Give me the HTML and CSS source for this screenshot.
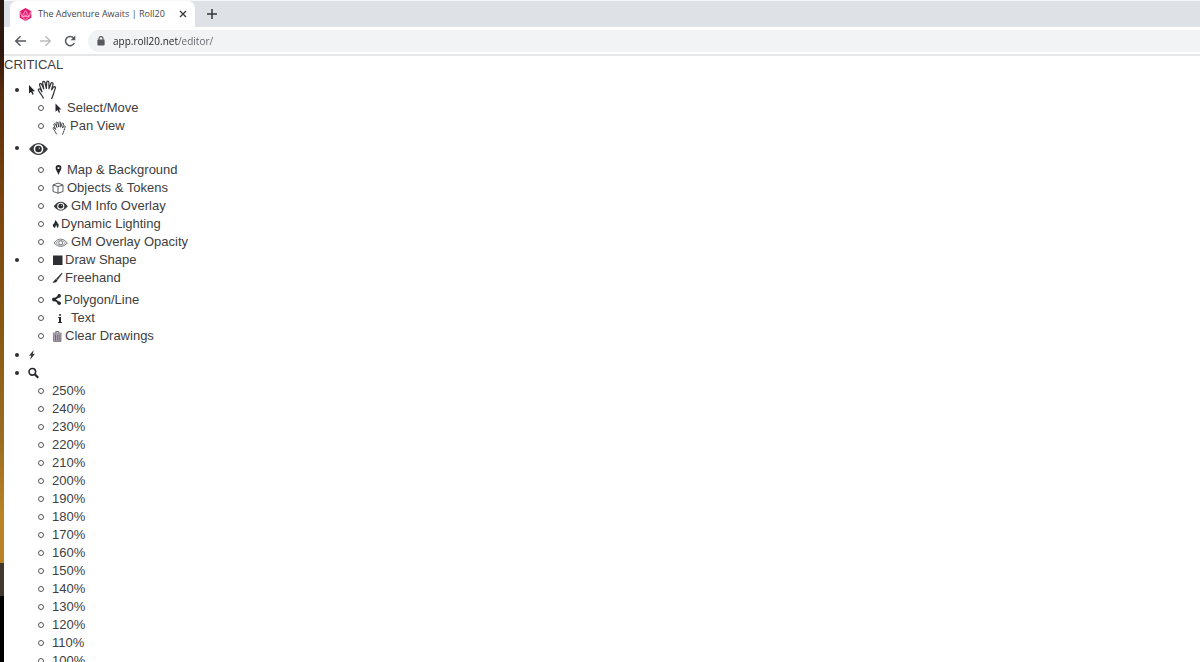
FILE: index.html
```html
<!DOCTYPE html>
<html lang="en">
<head>
<meta charset="utf-8">
<title>The Adventure Awaits | Roll20</title>
<link rel="stylesheet" href="styles.css">
</head>
<body>
<div class="desktop"></div>
<div class="window">
  <header class="browser">
    <div class="tabs">
      <div class="tab">
        <svg class="favicon" width="13" height="13" viewBox="0 0 13 13"><path d="M6.500 0 12.300 3.200V9.800L6.500 13 .7 9.800V3.200Z" fill="#e9186f"/><path d="M6.500 2.500 10 8.600H3ZM1 3.500l2 5 3.500 3.500L10 8.600l2-5M4.800 7.200h3.400" fill="none" stroke="#ffc3da" stroke-width=".8"/></svg>
        <span class="title">The Adventure Awaits | Roll20</span>
        <button class="plain" aria-label="Close tab"><svg width="8" height="8" viewBox="0 0 8 8"><path d="M1 1 7 7M7 1 1 7" stroke="#333538" stroke-width="1.300"/></svg></button>
      </div>
      <button class="plain" aria-label="New tab"><svg width="12" height="12" viewBox="0 0 12 12"><path d="M6 1V11M1 6H11" stroke="#35373a" stroke-width="1.500"/></svg></button>
    </div>
    <div class="toolbar">
      <button class="plain" aria-label="Back"><svg width="13" height="12" viewBox="0 0 13 12"><path d="M12 6H2M6.500 1.200 1.700 6l4.800 4.800" fill="none" stroke="#55585c" stroke-width="1.400"/></svg></button>
      <button class="plain" aria-label="Forward"><svg width="13" height="12" viewBox="0 0 13 12"><path d="M1 6H11M6.500 1.200 11.300 6l-4.800 4.800" fill="none" stroke="#babcbe" stroke-width="1.400"/></svg></button>
      <button class="plain" aria-label="Reload"><svg width="12" height="12" viewBox="0 0 12 12"><path d="M10.300 8A4.600 4.600 0 1 1 9.600 3" fill="none" stroke="#55585c" stroke-width="1.500"/><path d="M11.300.6V5.300H6.600Z" fill="#55585c"/></svg></button>
      <div class="address">
        <svg width="8" height="10" viewBox="0 0 8 10"><path d="M2 4V2.600a2 2 0 0 1 4 0V4" fill="none" stroke="#55585c" stroke-width="1.100"/><rect x=".4" y="3.600" width="7.200" height="6" rx=".8" fill="#55585c"/></svg>
        <input class="url" type="text" aria-label="Address" value="app.roll20.net/editor/">
      </div>
    </div>
  </header>
  <main class="page">
    <p class="notice">CRITICAL</p>
    <ul class="menu">
      <li class="group">
        <div class="head first">
          <svg width="9" height="12" viewBox="0 0 9 12"><path d="M1 1v8.600L3 7.800l1.400 3 1.300-.6L4.400 7.300H7Z" fill="#222428"/></svg>
          <svg width="20" height="20" viewBox="0 0 20 20"><use href="#hand"/></svg>
        </div>
        <ul class="sub">
          <li><svg width="15" height="12" viewBox="0 0 15 12"><path d="M3.500 1.500v8.300L5.500 8l1.300 2.800 1.300-.6L6.900 7.400h2.500Z" fill="#2c2630"/></svg>Select/Move</li>
          <li><svg class="low" width="18" height="14" viewBox="0 0 18 14"><use href="#hand" transform="scale(.72)"/></svg>Pan View</li>
        </ul>
      </li>
      <li class="group">
        <div class="head tall">
          <svg width="21" height="14" viewBox="0 0 21 14"><use href="#eye"/></svg>
        </div>
        <ul class="sub">
          <li><svg width="15" height="12" viewBox="0 0 15 12"><path fill-rule="evenodd" d="M6.500 1a2.900 2.900 0 0 1 2.900 3C9.400 6 7.200 8 6.500 11 5.800 8 3.600 6 3.600 4a2.900 2.900 0 0 1 2.900-3Zm0 1.900a1.100 1.100 0 1 0 0 2.200 1.100 1.100 0 0 0 0-2.200Z" fill="#25272a"/></svg>Map &amp; Background</li>
          <li><svg width="15" height="12" viewBox="0 0 15 12"><path d="M1 3 6 1l5 2-5 1.500ZM1 3v6.500l5 1.700 5-1.700V3M6 4.500v6.700" fill="none" stroke="#4a4c50" stroke-width=".9" stroke-linejoin="round"/></svg>Objects &amp; Tokens</li>
          <li><svg width="19" height="12" viewBox="0 0 19 12"><use href="#eye" transform="translate(1 1) scale(.74)"/></svg>GM Info Overlay</li>
          <li><svg width="9" height="12" viewBox="0 0 9 12"><path d="M3.200 2C5.500 4 6 5.500 5.800 6.200l.5-.8C7 7 6.800 9 5 10 5.300 8.500 4.500 7.500 4 7c0 1.200-1 1.500-.8 3C.8 9.500.3 7 1.500 5.500l.5.900C2 4.500 3.300 4 3.200 2Z" fill="#28292c"/></svg>Dynamic Lighting</li>
          <li><svg width="19" height="12" viewBox="0 0 19 12"><g fill="none" stroke="#77797c"><path d="M2 7Q8.500-1 15.500 7 8.500 14 2 7Z"/><path d="M4 7Q8.500 2 13.500 7 8.500 11.500 4 7Z" stroke-width=".6"/><circle cx="8.700" cy="6.800" r="2"/></g></svg>GM Overlay Opacity</li>
        </ul>
      </li>
      <li class="group headless">
        <ul class="sub">
          <li><svg width="13" height="12" viewBox="0 0 13 12"><path d="M1 1.500h9.500v9.500H1Z" fill="#2d2f32"/></svg>Draw Shape</li>
          <li><svg width="13" height="12" viewBox="0 0 13 12"><path d="M10.300 1.500 5.500 7.800 4.300 6.900 9.300 1.500Q10 1 10.300 1.500ZM3.900 7.300l1.300 1C5 10 2.600 11 .8 10.200 2.800 9.700 2.200 7.700 3.900 7.300Z" fill="#25272a" stroke="#25272a" stroke-width=".4"/></svg>Freehand</li>
          <li class="spaced"><svg width="12" height="12" viewBox="0 0 12 12"><path d="M7.200 2 2.300 5.500 7.200 9" fill="none" stroke="#25272a" stroke-width="2"/><circle cx="7.200" cy="1.900" r="1.800" fill="#25272a"/><circle cx="2" cy="5.500" r="1.900" fill="#25272a"/><circle cx="7.200" cy="9.200" r="1.800" fill="#25272a"/></svg>Polygon/Line</li>
          <li><svg width="19" height="12" viewBox="0 0 19 12"><path d="M7 2.200h2v1.600H7ZM6.200 5H9v5h.9v1H6.200v-1H7V6h-.8Z" fill="#25272a"/></svg>Text</li>
          <li><svg width="13" height="12" viewBox="0 0 13 12"><path d="M1.700 4h7.200v7.300H1.700Z" fill="#bdb4c2"/><path d="M.8 3.200h9M3.800 3V1.500h3V3M1.700 4v7.300h7.200V4M3.500 4.500v6M5.300 4.500v6M7.100 4.500v6" fill="none" stroke="#625c65" stroke-width=".9"/></svg>Clear Drawings</li>
        </ul>
      </li>
      <li class="group">
        <div class="head"><svg width="9" height="12" viewBox="0 0 9 12"><path d="M5.700 1 1 6.800l2.300-.3L2 11 6.900 4.700l-2.200.4Z" fill="#303134"/></svg></div>
      </li>
      <li class="group">
        <div class="head"><svg width="12" height="12" viewBox="0 0 12 12"><circle cx="4.300" cy="4.800" r="3.300" fill="none" stroke="#25272a" stroke-width="1.600"/><path d="m6.700 7.200 3.500 3.500" stroke="#25272a" stroke-width="2.200"/></svg></div>
        <ul class="sub">
          <li>250%</li><li>240%</li><li>230%</li><li>220%</li><li>210%</li><li>200%</li><li>190%</li><li>180%</li><li>170%</li><li>160%</li><li>150%</li><li>140%</li><li>130%</li><li>120%</li><li>110%</li><li>100%</li>
        </ul>
      </li>
    </ul>
  </main>
</div>
<svg class="defs" width="0" height="0">
  <defs>
    <g id="hand"><path d="M6.500 18.500C5.500 15.500 2.800 13 1.500 10.500.9 9 2.500 8.300 3.500 9.700L5 11.800 2.600 5.200C2.200 3.500 4 3 4.700 4.500L6.800 9 5.700 3C5.500 1 7.500.7 8 2.500L9.400 8.500 9.700 2.400C9.800.6 11.800.6 11.900 2.400L12 8.700 13.800 3.700C14.500 2 16.400 2.700 16 4.300L14.500 9.800 16.300 7.500C17.400 6 19 7 18.300 8.400 17 11 17 14 14.500 19" fill="#fff" stroke="#303134" stroke-width="1.200" stroke-linejoin="round"/></g>
    <g id="eye"><path fill-rule="evenodd" d="M1 7Q10.500-5 20 7 10.500 19 1 7ZM10.500 2.200a4.800 4.800 0 1 0 0 9.600 4.800 4.800 0 0 0 0-9.600Z" fill="#3a3b3e"/><circle cx="10.500" cy="7" r="3.300" fill="#2d2f32"/><circle cx="11.300" cy="6.200" r=".7" fill="#ddd"/></g>
  </defs>
</svg>
</body>
</html>
```
FILE: styles.css
```css
*, *::before { box-sizing: border-box; }

body {
  margin: 0;
  height: 100vh;
  overflow: hidden;
  display: grid;
  grid-template-columns: 4px 1fr;
  background: #fff;
  color: #404040;
  font: 13px/18px "Liberation Sans", Arial, sans-serif;
}

ul, p { margin: 0; padding: 0; list-style: none; }
svg { display: block; flex: none; }

.defs { position: absolute; }

.desktop {
  background: linear-gradient(#241710 0%, #30180c 8%, #5a2c0b 14%, #7a430f 30%, #8b5813 50%, #9b6b22 66%, #b88424 78%, #b98225 85%, #40382c 85%, #40382c 90%, #000 90%);
}

.window { min-width: 0; overflow: hidden; }

.browser {
  border-top: 1px solid #f6f7f8;
  border-bottom: 2px solid #e6e7e9;
}

.tabs {
  display: flex;
  align-items: center;
  gap: 11px;
  height: 26px;
  padding-left: 6px;
  background: #dee1e6;
}

.tab {
  display: flex;
  align-items: center;
  align-self: stretch;
  width: 185px;
  padding: 0 8px 0 9px;
  border-radius: 7px 7px 0 0;
  background: #fff;
}

.title {
  flex: 1;
  margin-left: 6px;
  color: #45474a;
  font: 9px/12px "Open Sans", sans-serif;
  white-space: nowrap;
}

.plain {
  display: block;
  padding: 0;
  border: 0;
  background: none;
}

.toolbar {
  display: flex;
  align-items: center;
  gap: 12px;
  height: 27px;
  padding-left: 10px;
}

.address {
  flex: 1;
  display: flex;
  align-items: center;
  gap: 8px;
  height: 22px;
  padding-left: 9px;
  border-radius: 11px 0 0 11px;
  background: #f1f3f4;
}

.url {
  flex: 1;
  min-width: 0;
  padding: 0;
  border: 0;
  outline: 0;
  background: linear-gradient(90deg, #202124 65px, #5f6368 65px);
  -webkit-background-clip: text;
  background-clip: text;
  -webkit-text-fill-color: transparent;
  font: 10px/16px "Open Sans", sans-serif;
}

.notice { line-height: 17px; }

.menu { padding-top: 7px; }

.group {
  display: grid;
  grid-template-columns: 24px 1fr;
}

.group::before {
  content: "";
  align-self: center;
  width: 4px;
  height: 4px;
  margin-left: 11px;
  border-radius: 50%;
  background: #303030;
}

.head {
  display: flex;
  align-items: center;
  height: 18px;
}

.first { height: 19px; }
.tall { height: 26px; padding-top: 2px; }

.sub {
  grid-column: 1 / -1;
  padding-left: 34px;
}

.sub li {
  display: flex;
  align-items: center;
}

.sub li::before {
  content: "";
  flex: none;
  width: 6px;
  height: 6px;
  margin-right: 8px;
  border: 1px solid #555;
  border-radius: 50%;
}

.low { align-self: flex-end; }

.spaced { padding-top: 4px; }

.headless { padding-bottom: 1px; }
.headless .sub { grid-row: 1; grid-column: 1 / -1; }
.headless::before {
  grid-row: 1;
  grid-column: 1;
  align-self: start;
  margin-top: 7px;
}
```
